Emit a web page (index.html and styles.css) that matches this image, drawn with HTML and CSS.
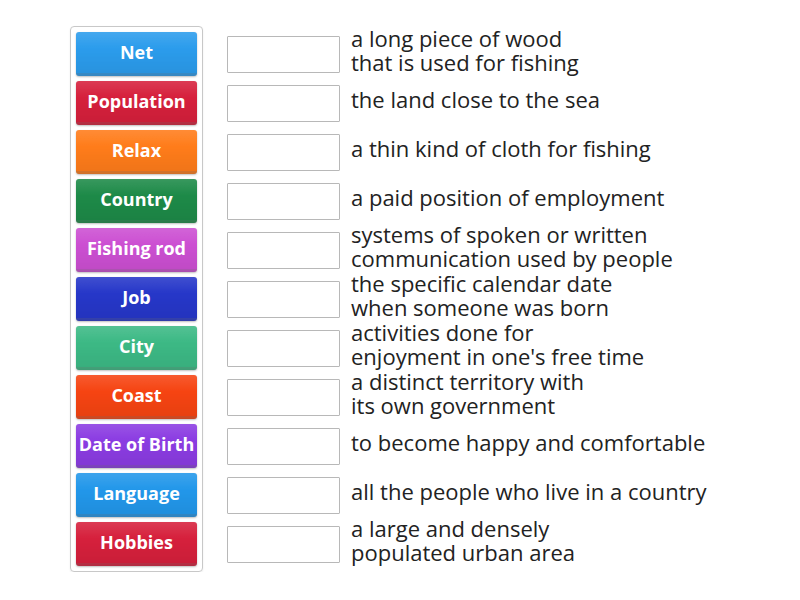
FILE: index.html
```html
<!DOCTYPE html>
<html lang="en">
<head>
  <meta charset="UTF-8" />
  <title>Match up</title>
  <link rel="stylesheet" href="styles.css">
</head>
<body>

<main class="game">
  <div class="tiles">
    <div class="tile blue">Net</div>
    <div class="tile red">Population</div>
    <div class="tile orange">Relax</div>
    <div class="tile green">Country</div>
    <div class="tile pink">Fishing rod</div>
    <div class="tile navy">Job</div>
    <div class="tile mint">City</div>
    <div class="tile flame">Coast</div>
    <div class="tile purple">Date of Birth</div>
    <div class="tile sky">Language</div>
    <div class="tile red">Hobbies</div>
  </div>

  <div class="targets">
    <div class="row"><div class="slot"></div><p>a long piece of wood<br>that is used for fishing</p></div>
    <div class="row"><div class="slot"></div><p>the land close to the sea</p></div>
    <div class="row"><div class="slot"></div><p>a thin kind of cloth for fishing</p></div>
    <div class="row"><div class="slot"></div><p>a paid position of employment</p></div>
    <div class="row"><div class="slot"></div><p>systems of spoken or written<br>communication used by people</p></div>
    <div class="row"><div class="slot"></div><p>the specific calendar date<br>when someone was born</p></div>
    <div class="row"><div class="slot"></div><p>activities done for<br>enjoyment in one's free time</p></div>
    <div class="row"><div class="slot"></div><p>a distinct territory with<br>its own government</p></div>
    <div class="row"><div class="slot"></div><p>to become happy and comfortable</p></div>
    <div class="row"><div class="slot"></div><p>all the people who live in a country</p></div>
    <div class="row"><div class="slot"></div><p>a large and densely<br>populated urban area</p></div>
  </div>
</main>

</body>
</html>
```

FILE: styles.css
```css
body {
  margin: 0;
  background: #fff;
  font-family: "Open Sans", "Liberation Sans", sans-serif;
  color: #222;
}
.game {
  display: flex;
  align-items: flex-start;
  gap: 24px;
  padding: 26px 0 0 70px;
}
.tiles {
  display: flex;
  flex-direction: column;
  gap: 5px;
  padding: 5px;
  border: 1px solid #c8c8c8;
  border-radius: 4px;
  box-shadow: 0 1px 2px rgba(0,0,0,0.08);
}
.tile {
  width: 121px;
  height: 44px;
  box-sizing: border-box;
  display: flex;
  align-items: center;
  justify-content: center;
  border-radius: 3px;
  color: #fff;
  font-weight: bold;
  font-size: 18px;
  border-bottom: 3px solid rgba(0,0,0,0.18);
  padding-bottom: 1px;
  box-shadow: 0 1px 2px rgba(0,0,0,0.25);
  background-image: linear-gradient(to bottom, rgba(255,255,255,0.12), rgba(255,255,255,0) 40%, rgba(0,0,0,0.06));
}
.blue   { background-color: #2b9cec; }
.red    { background-color: #d6203c; }
.orange { background-color: #ff7c1a; }
.green  { background-color: #1d8a48; }
.pink   { background-color: #cc4fd2; }
.navy   { background-color: #2637c9; }
.mint   { background-color: #3cb985; }
.flame  { background-color: #f64412; }
.purple { background-color: #8b3ce2; }
.sky    { background-color: #2297ea; }

.targets {
  display: flex;
  flex-direction: column;
  gap: 5px;
  padding-top: 6px;
}
.row {
  height: 44px;
  display: flex;
  align-items: center;
  gap: 11px;
}
.slot {
  width: 113px;
  height: 37px;
  box-sizing: border-box;
  border: 1px solid #b8b8b8;
  border-radius: 1px;
  background: #fff;
  flex-shrink: 0;
  margin-top: 1px;
}
.row p {
  margin: 0 0 8px;
  font-size: 22px;
  line-height: 24px;
  white-space: nowrap;
}
```
